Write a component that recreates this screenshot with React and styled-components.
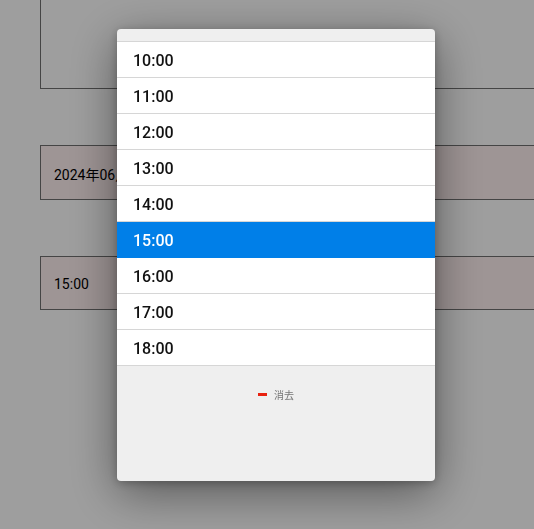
import styled, { createGlobalStyle } from "styled-components";

const GlobalStyle = createGlobalStyle`
  html, body {
    margin: 0;
    padding: 0;
    background: #ffffff;
    font-family: Roboto, "Noto Sans CJK JP", sans-serif;
    overflow: hidden;
  }
`;

const hours = ["10:00", "11:00", "12:00", "13:00", "14:00", "15:00", "16:00", "17:00", "18:00"];

/* pagina de fondo */
const Page = styled.div`
  width: 534px;
  height: 529px;
  padding-left: 40px;
  box-sizing: border-box;
  overflow: hidden;
  display: flex;
  flex-direction: column;
  gap: 56px;
`;

const Field = styled.div`
  margin-right: -2px;
  height: ${(p) => p.$h}px;
  flex-shrink: 0;
  box-sizing: border-box;
  border: 1px solid #707070;
  background: ${(p) => (p.$tinted ? "#fff0f0" : "#ffffff")};
  display: flex;
  align-items: center;
  padding: 2px 0 0 13px;
  font-size: 14px;
  color: #000;
  white-space: nowrap;
`;

const FirstField = styled(Field)`
  margin-top: -12px;
`;

/* modal */
const Overlay = styled.div`
  position: fixed;
  inset: 0;
  background: rgba(0, 0, 0, 0.38);
  display: flex;
  align-items: flex-start;
  padding: 29px 0 0 117px;
`;

const Modal = styled.div`
  width: 318px;
  height: 452px;
  background: #efefef;
  border-radius: 4px;
  overflow: hidden;
  box-shadow: 0 12px 48px rgba(0, 0, 0, 0.45), 0 2px 10px rgba(0, 0, 0, 0.25);
  display: flex;
  flex-direction: column;
`;

const Header = styled.div`
  height: 12px;
  border-bottom: 1px solid #d6d6d6;
`;

const List = styled.ul`
  list-style: none;
  margin: 0;
  padding: 0;
  background: #fff;
`;

const Row = styled.li`
  height: 36px;
  box-sizing: border-box;
  border-bottom: 1px solid ${(p) => (p.$active ? "#007fe8" : "#d6d6d6")};
  background: ${(p) => (p.$active ? "#007fe8" : "#fff")};
  color: ${(p) => (p.$active ? "#fff" : "#111")};
  display: flex;
  align-items: center;
  padding: 2px 0 0 16px;
  font-size: 16px;
  font-weight: 500;
`;

const Footer = styled.div`
  flex: 1;
  display: flex;
  justify-content: center;
  padding-top: 21px;
`;

const ClearBtn = styled.button`
  display: flex;
  align-items: center;
  gap: 7px;
  height: 14px;
  border: none;
  background: none;
  padding: 0;
  font-family: "Noto Sans CJK JP", sans-serif;
  font-size: 10px;
  color: #777;
`;

const Dash = styled.span`
  width: 9px;
  height: 3px;
  background: #e8210f;
`;

export default function App() {
  return (
    <>
      <GlobalStyle />
      <Page>
        <FirstField $h={101} />
        <Field $h={55} $tinted>2024年06月</Field>
        <Field $h={54} $tinted>15:00</Field>
      </Page>
      <Overlay>
        <Modal>
          <Header />
          <List>
            {hours.map((h) => (
              <Row key={h} $active={h === "15:00"}>{h}</Row>
            ))}
          </List>
          <Footer>
            <ClearBtn>
              <Dash />
              消去
            </ClearBtn>
          </Footer>
        </Modal>
      </Overlay>
    </>
  );
}
